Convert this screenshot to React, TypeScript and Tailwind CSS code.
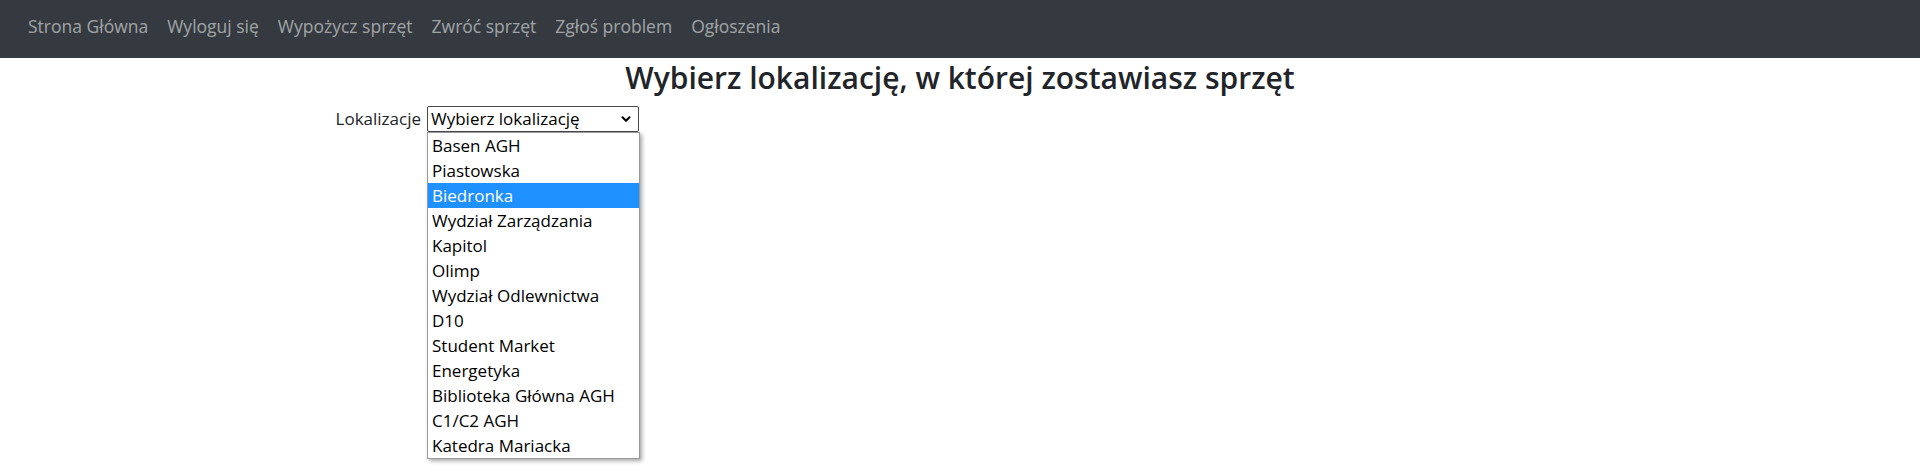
import { ChevronDown } from 'lucide-react';

const navLinks = ['Strona Główna', 'Wyloguj się', 'Wypożycz sprzęt', 'Zwróć sprzęt', 'Zgłoś problem', 'Ogłoszenia'];

const locations = [
  'Basen AGH',
  'Piastowska',
  'Biedronka',
  'Wydział Zarządzania',
  'Kapitol',
  'Olimp',
  'Wydział Odlewnictwa',
  'D10',
  'Student Market',
  'Energetyka',
  'Biblioteka Główna AGH',
  'C1/C2 AGH',
  'Katedra Mariacka',
];

export default function App() {
  const highlighted = 'Biedronka';

  return (
    <div className="min-h-[469px] bg-white text-[#212529] font-['Open_Sans',sans-serif]">
      {/* Navbar */}
      <nav className="h-[58px] bg-[#343a40] flex items-center pl-[28px] pb-[5px]">
        <ul className="flex items-center gap-[19px]">
          {navLinks.map((link) => (
            <li key={link}>
              <a href="#" className="text-[17.5px] text-[rgba(255,255,255,0.55)] hover:text-white">
                {link}
              </a>
            </li>
          ))}
        </ul>
      </nav>

      {/* Content */}
      <main>
        <h1 className="text-center text-[30px] leading-[40px] font-semibold">
          Wybierz lokalizację, w której zostawiasz sprzęt
        </h1>

        <div className="mt-[8px] flex items-center">
          <div className="ml-[333px] w-[88px] flex justify-end">
            <label className="text-[17px] leading-[24px]">Lokalizacje</label>
          </div>
          <div className="relative ml-[6px]">
            <div className="w-[212px] h-[26px] border border-[#4a4a4a] rounded-[2px] bg-white flex items-center justify-between pl-[3px] pr-[5px]">
              <span className="text-[17px] leading-[24px] text-black">Wybierz lokalizację</span>
              <ChevronDown size={14} strokeWidth={3.5} className="text-black" />
            </div>

            {/* Open dropdown list */}
            <ul className="absolute left-0 top-full w-[213px] bg-white border border-[#9a9a9a] shadow-[2px_2px_4px_rgba(0,0,0,0.35)]">
              {locations.map((loc) => (
                <li
                  key={loc}
                  className={
                    loc === highlighted
                      ? 'h-[25px] leading-[25px] pl-[4px] text-[17px] bg-[#1e90ff] text-white'
                      : 'h-[25px] leading-[25px] pl-[4px] text-[17px] text-black'
                  }
                >
                  {loc}
                </li>
              ))}
            </ul>
          </div>
        </div>
      </main>
    </div>
  );
}
